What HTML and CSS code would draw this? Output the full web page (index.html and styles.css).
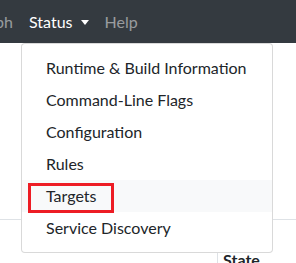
FILE: index.html
```html
<!DOCTYPE html>
<html lang="en">

<head>
    <meta charset="UTF-8">
    <meta name="viewport" content="width=device-width, initial-scale=1.0">
    <title>Status menu</title>

    <link rel="stylesheet" href="styles.css">
</head>

<body>
    <nav class="navbar">
        <ul class="nav">
            <li class="nav-item clipped"><a class="nav-link muted" href="#">Graph</a></li>
            <li class="nav-item dropdown">
                <a class="nav-link active" href="#">Status<span class="caret"></span></a>
                <div class="dropdown-menu">
                    <a class="dropdown-item" href="#">Runtime &amp; Build Information</a>
                    <a class="dropdown-item" href="#">Command-Line Flags</a>
                    <a class="dropdown-item" href="#">Configuration</a>
                    <a class="dropdown-item" href="#">Rules</a>
                    <a class="dropdown-item hover marked" href="#">Targets</a>
                    <a class="dropdown-item" href="#">Service Discovery</a>
                </div>
            </li>
            <li class="nav-item"><a class="nav-link muted" href="#">Help</a></li>
        </ul>
    </nav>

    <main class="content">
        <div class="table">
            <div class="cell"></div>
            <div class="cell head">State</div>
        </div>
    </main>
</body>

</html>
```

FILE: styles.css
```css
body {
    margin: 0;
    font-family: Lato, "Noto Sans", sans-serif;
    font-size: 16px;
    color: #212529;
    background: #fff;
    overflow: hidden;
}

a {
    text-decoration: none;
}

.navbar {
    height: 43px;
    background: #343a40;
}

.nav {
    display: flex;
    align-items: stretch;
    height: 100%;
    margin: 0;
    padding: 0;
    list-style: none;
}

.nav-item {
    display: flex;
    align-items: center;
}

.clipped {
    width: 21px;
    overflow: hidden;
    justify-content: flex-end;
}

.nav-link {
    display: flex;
    align-items: center;
    padding: 0 8px;
    line-height: 24px;
    white-space: nowrap;
}

.muted {
    color: rgba(255, 255, 255, 0.5);
}

.active {
    color: #fff;
}

.caret {
    display: inline-block;
    margin-left: 8px;
    margin-top: 1px;
    border-top: 5px solid #fff;
    border-left: 4.5px solid transparent;
    border-right: 4.5px solid transparent;
}

.dropdown {
    position: relative;
}

.dropdown-menu {
    position: absolute;
    top: 100%;
    left: 0;
    z-index: 10;
    width: 250px;
    padding: 8px 0;
    background: #fff;
    border: 1px solid rgba(0, 0, 0, 0.15);
    border-radius: 4px;
}

.dropdown-item {
    display: block;
    position: relative;
    padding: 4px 24px;
    line-height: 24px;
    color: #212529;
    white-space: nowrap;
}

.hover {
    background: #f8f9fa;
}

.marked::after {
    content: "";
    position: absolute;
    left: 6px;
    top: 3px;
    width: 80px;
    height: 24px;
    border: 3px solid #ed1c24;
}

.content {
    margin-top: 176px;
}

.table {
    display: grid;
    grid-template-columns: 217px 1fr;
    height: 43px;
    overflow: hidden;
    border-top: 1px solid #dee2e6;
}

.head {
    border-left: 1px solid #dee2e6;
    padding: 28px 5px 0;
    line-height: 24px;
    font-weight: bold;
}
```
